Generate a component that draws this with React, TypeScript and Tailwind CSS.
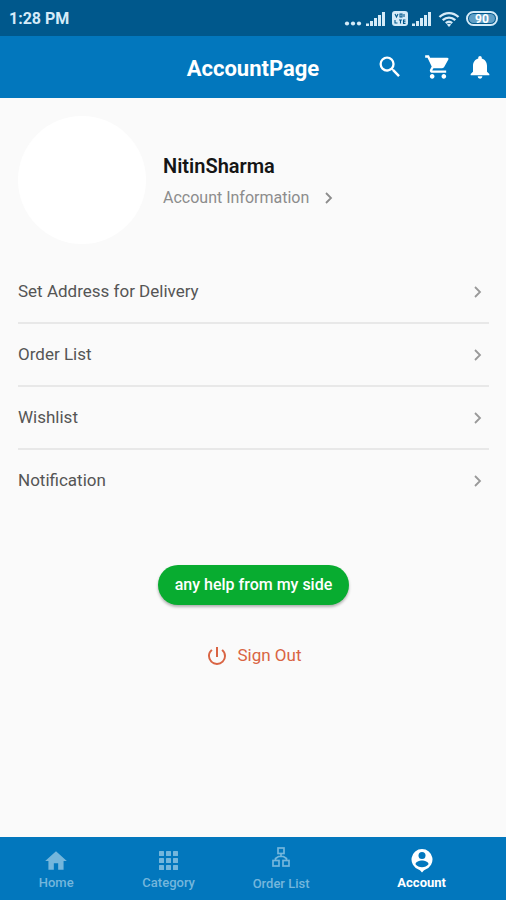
import type { ReactNode } from "react";
import {
  MdHome,
  MdNotifications,
  MdPowerSettingsNew,
  MdSearch,
  MdShoppingCart,
} from "react-icons/md";

function SignalIcon() {
  return (
    <svg width="20" height="16" viewBox="0 0 20 16" fill="currentColor" aria-hidden="true">
      <rect x="0" y="12.500" width="3" height="2.500" />
      <rect x="4" y="10" width="3" height="5" />
      <rect x="8" y="7" width="3" height="8" />
      <rect x="12" y="4" width="3" height="11" />
      <rect x="16" y="1" width="3" height="14" />
    </svg>
  );
}

function VolteIcon() {
  return (
    <svg width="16" height="16" viewBox="0 0 16 16" aria-hidden="true">
      <rect width="16" height="15" rx="3" fill="currentColor" />
      <path
        d="M3 3l1.500 3L6 3M8 3h2v3H8zM12 3v3M3 9v3h2.500M7 9h3M8.500 9v3.500M13.500 9h-2v3.500h2M11.500 10.700h2"
        fill="none"
        stroke="#00588c"
        strokeWidth="1.100"
      />
    </svg>
  );
}

function WifiIcon() {
  return (
    <svg width="22" height="16" viewBox="0 0 22 16" fill="none" stroke="currentColor" strokeWidth="2.400" aria-hidden="true">
      <path d="M1.500 6C7 .8 15 .8 20.500 6" />
      <path d="M4.700 9.200c3.800-3.400 8.800-3.400 12.600 0" />
      <path d="M7.800 12.200c2-1.700 4.400-1.700 6.400 0" />
      <path d="M11 16l-2.200-2.400c1.300-1 3.100-1 4.400 0z" fill="currentColor" stroke="none" />
    </svg>
  );
}

function ChevronIcon() {
  return (
    <svg width="8" height="12" viewBox="0 0 8 12" fill="none" stroke="currentColor" strokeWidth="1.800" aria-hidden="true">
      <path d="M1 1l5 5-5 5" />
    </svg>
  );
}

function GridIcon() {
  return (
    <svg width="20" height="20" viewBox="0 0 20 20" fill="currentColor" aria-hidden="true">
      {[0, 7, 14].map((y) =>
        [0, 7, 14].map((x) => <rect key={`${x}-${y}`} x={x} y={y} width="5" height="5" rx=".5" />),
      )}
    </svg>
  );
}

function TreeIcon() {
  return (
    <svg width="20" height="20" viewBox="0 0 20 20" fill="none" stroke="currentColor" strokeWidth="1.700" aria-hidden="true">
      <rect x="7" y="1" width="6" height="5.500" />
      <rect x="2" y="13.500" width="6" height="5.500" />
      <rect x="12" y="13.500" width="6" height="5.500" />
      <path d="M10 6.500v3M4.500 13.500v-2L7.500 9.500h5l3 2v2" />
    </svg>
  );
}

function PersonPinIcon() {
  return (
    <svg width="22" height="24" viewBox="0 0 22 24" aria-hidden="true">
      <path d="M11 0a10.500 10.500 0 0 0-3.500 20.400c.8.300 1.200.600 1.700 1.200L11 23.500l1.800-1.900c.5-.6.9-.9 1.700-1.200A10.500 10.500 0 0 0 11 0z" fill="currentColor" />
      <circle cx="11" cy="6.500" r="3.500" fill="#0277bd" />
      <path d="M4.500 15.200c0-2.500 4-3.700 6.500-3.700s6.500 1.200 6.500 3.700c-1.500 1.900-3.900 3-6.500 3s-5-1.100-6.500-3z" fill="#0277bd" />
    </svg>
  );
}

function NavItem({
  icon,
  label,
  active = false,
  tall = false,
}: {
  icon: ReactNode;
  label: string;
  active?: boolean;
  tall?: boolean;
}) {
  return (
    <a
      href="#"
      aria-current={active ? "page" : undefined}
      className={`flex flex-col items-center justify-center text-[13px] leading-4 ${
        active ? "font-bold text-white" : "font-medium text-[#74b6dc]"
      }`}
    >
      <span className={tall ? "flex h-[30px] items-start pt-px" : "flex h-7 items-center"}>{icon}</span>
      {label}
    </a>
  );
}

const menu = ["Set Address for Delivery", "Order List", "Wishlist", "Notification"];

export default function App() {
  return (
    <div className="flex min-h-screen flex-col bg-[#fafafa] font-['Roboto',sans-serif]">
      <div className="flex h-9 items-center justify-between bg-[#00588c] pt-px pr-2 pl-[9px] text-[#d5ebf8]">
        <span className="text-base font-bold">1:28 PM</span>
        <div className="flex items-center gap-[6px]">
          <div className="flex items-center gap-1">
            <svg width="18" height="16" viewBox="0 0 18 16" fill="currentColor" aria-hidden="true">
              <circle cx="3" cy="12.500" r="2.100" />
              <circle cx="9" cy="12.500" r="2.100" />
              <circle cx="15" cy="12.500" r="2.100" />
            </svg>
            <SignalIcon />
          </div>
          <div className="flex items-center gap-1">
            <VolteIcon />
            <SignalIcon />
          </div>
          <WifiIcon />
          <span className="flex h-[15px] w-8 items-center rounded-full border-2 border-current p-px">
            <span className="flex h-full w-full items-center justify-center rounded-full bg-[#5f9fc6] text-xs font-bold text-white">
              90
            </span>
          </span>
        </div>
      </div>

      <header className="grid h-[62px] grid-cols-[1fr_auto_1fr] items-center bg-[#0277bd] text-white">
        <h1 className="col-start-2 pt-0.5 text-[22px] font-bold">AccountPage</h1>
        <div className="flex items-center justify-end pr-3">
          <button type="button" aria-label="Search" className="mr-5">
            <MdSearch size={28} />
          </button>
          <button type="button" aria-label="Cart" className="mr-[14px]">
            <MdShoppingCart size={28} />
          </button>
          <button type="button" aria-label="Notifications">
            <MdNotifications size={28} />
          </button>
        </div>
      </header>

      <main className="flex flex-1 flex-col pt-[18px] pr-[17px] pl-[18px]">
        <section className="flex items-center gap-[17px]">
          <div className="size-32 rounded-full bg-white" />
          <div className="pt-1">
            <h2 className="text-xl leading-8 font-semibold text-[#151515]">NitinSharma</h2>
            <a href="#" className="flex items-center gap-4 text-base leading-8 text-[#8c8c8c]">
              Account Information
              <ChevronIcon />
            </a>
          </div>
        </section>

        <ul className="mt-[17px] divide-y-2 divide-[#e8e8e8]">
          {menu.map((label) => (
            <li key={label}>
              <a href="#" className="flex h-[61px] items-center justify-between pr-[7px] text-[17px] text-[#555]">
                {label}
                <span className="text-[#999]">
                  <ChevronIcon />
                </span>
              </a>
            </li>
          ))}
        </ul>

        <div className="mt-[54px] flex flex-col items-center gap-8">
          <button
            type="button"
            className="h-10 rounded-full bg-[#08ac30] px-[17px] text-base font-medium text-white shadow-[0_2px_3px_rgba(0,0,0,0.3)]"
          >
            any help from my side
          </button>
          <button type="button" className="flex h-[38px] items-center gap-2 text-[17px] text-[#d96443]">
            <MdPowerSettingsNew size={24} />
            Sign Out
          </button>
        </div>
      </main>

      <nav className="grid h-[63px] grid-cols-[2fr_2fr_2fr_3fr] bg-[#0277bd] pt-px">
        <NavItem icon={<MdHome size={26} />} label="Home" />
        <NavItem icon={<GridIcon />} label="Category" />
        <NavItem icon={<TreeIcon />} label="Order List" tall />
        <NavItem icon={<PersonPinIcon />} label="Account" active />
      </nav>
    </div>
  );
}
